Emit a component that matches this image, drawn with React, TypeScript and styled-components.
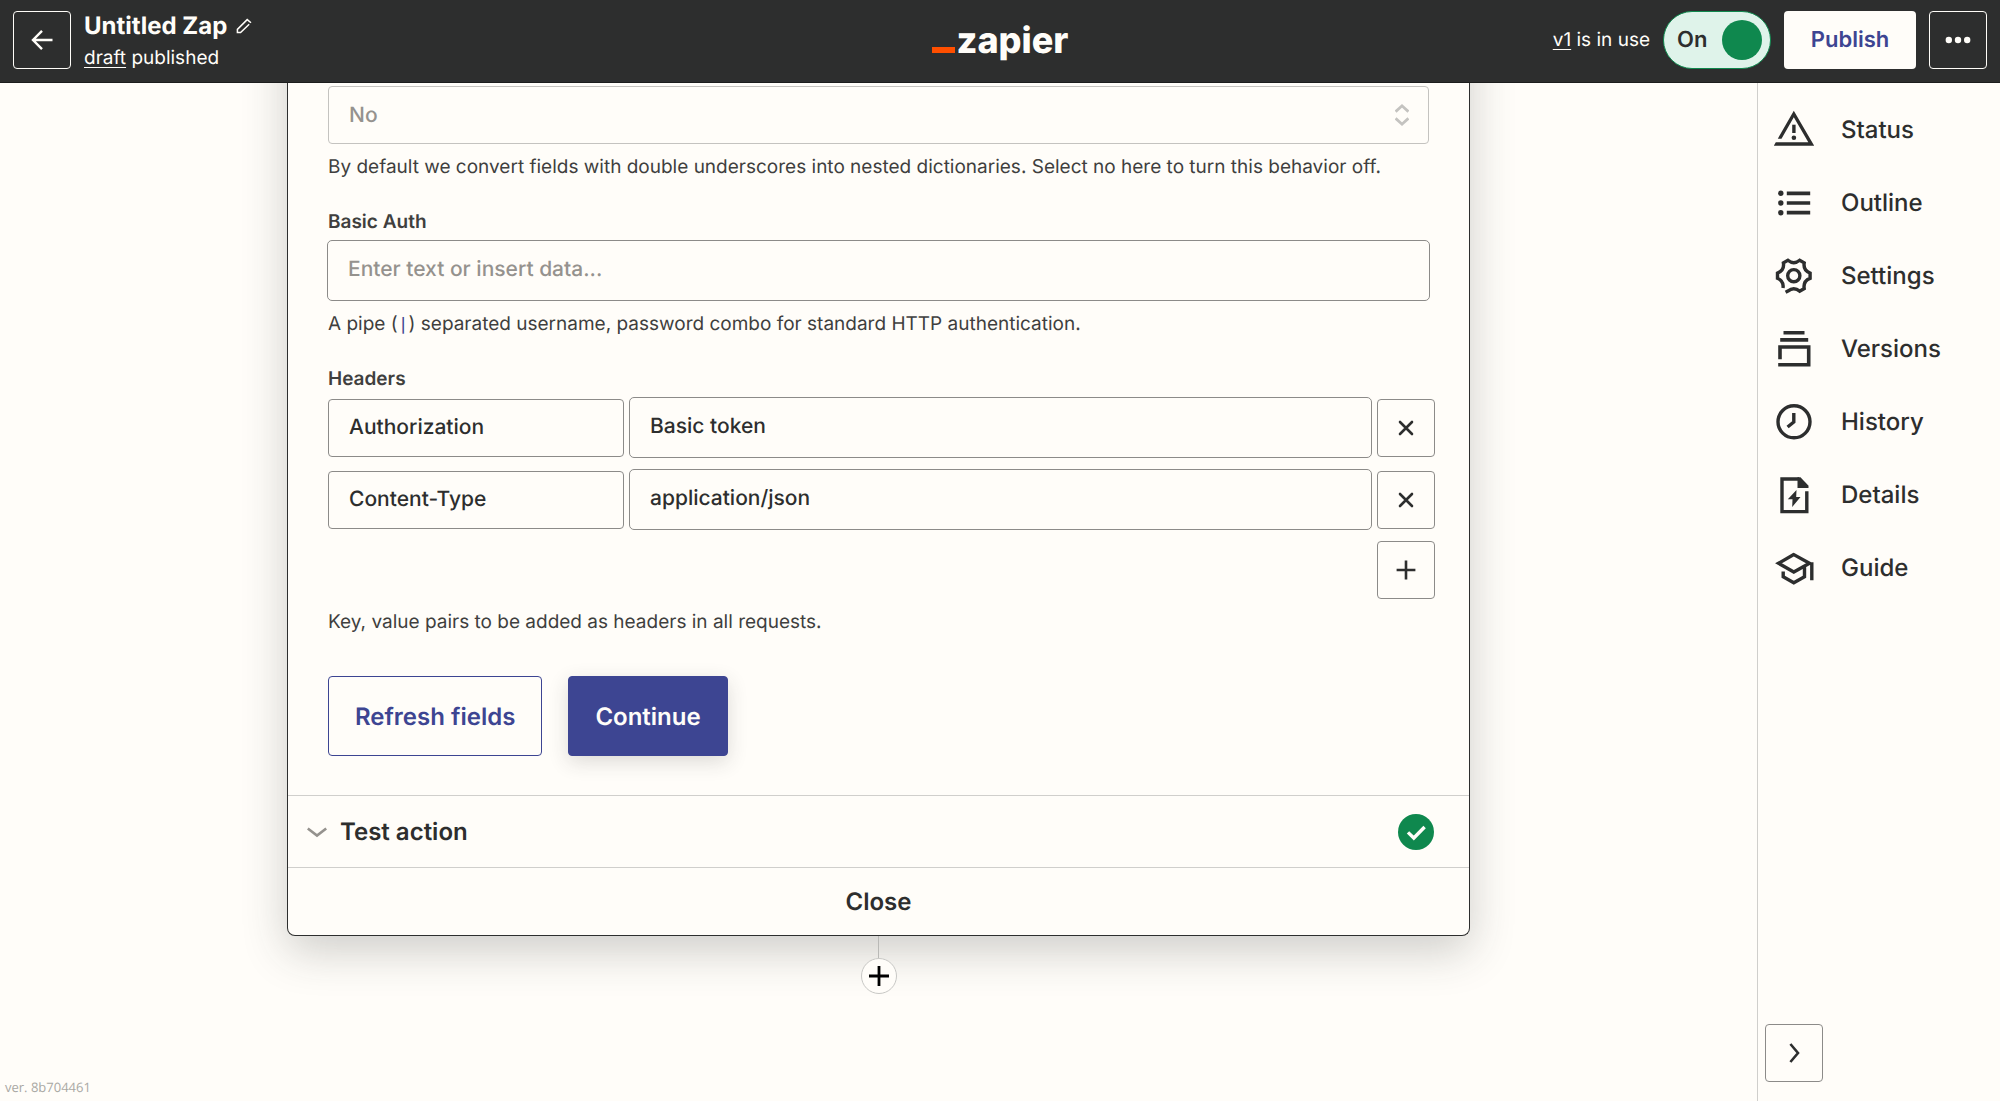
import React, { useState } from "react";
import styled, { createGlobalStyle } from "styled-components";

const color = {
  ink: "#2d2e2e",
  text: "#403f3e",
  paper: "#fffdf9",
  muted: "#95928e",
  line: "#d0cfcc",
  field: "#8c8b89",
  blue: "#3d4592",
  green: "#0f884e",
  mint: "#dff3ea",
  orange: "#ff4f00",
};

const GlobalStyle = createGlobalStyle`
  *, *::before, *::after { box-sizing: border-box; }
  body {
    margin: 0;
    background: ${color.paper};
    color: ${color.ink};
    font-family: Inter, "Liberation Sans", sans-serif;
    -webkit-font-smoothing: antialiased;
    text-rendering: geometricPrecision;
  }
  button, input, select { font: inherit; color: inherit; margin: 0; text-rendering: inherit; }
  button { cursor: pointer; padding: 0; }
  input { display: block; }
  svg { display: block; flex: none; }
`;

const Page = styled.div`
  display: grid;
  grid-template-rows: auto 1fr;
  height: 100vh;
`;

/* ---------- top bar ---------- */

const TopBar = styled.header`
  display: grid;
  grid-template-columns: 1fr auto 1fr;
  align-items: center;
  height: 83px;
  padding: 0 13px 2px;
  background: ${color.ink};
  border-bottom: 1px solid #1c1d1d;
  color: ${color.paper};
`;

const BarGroup = styled.div<{ $end?: boolean }>`
  display: flex;
  align-items: center;
  justify-content: ${(p) => (p.$end ? "flex-end" : "flex-start")};
  gap: 13px;
`;

const SquareButton = styled.button<{ $dark?: boolean }>`
  display: grid;
  place-items: center;
  width: 58px;
  height: 58px;
  border: 1px solid ${(p) => (p.$dark ? color.paper : color.field)};
  border-radius: 4px;
  background: transparent;
  color: ${(p) => (p.$dark ? color.paper : color.ink)};
`;

const Titles = styled.div`
  display: flex;
  flex-direction: column;
  gap: 3px;
  padding-top: 3px;
`;

const ZapName = styled.h1`
  display: flex;
  align-items: center;
  gap: 9px;
  margin: 0;
  font-size: 24px;
  line-height: 30px;
  font-weight: 700;
`;

const BareButton = styled.button`
  border: 0;
  background: none;
`;

const BarNote = styled.p`
  margin: 0;
  font-size: 19px;
  line-height: 28px;
  a { color: inherit; text-underline-offset: 3px; }
`;

const Logo = styled.a`
  display: flex;
  align-items: baseline;
  gap: 2px;
  color: ${color.paper};
  font-size: 36px;
  line-height: 46px;
  font-weight: 800;
  text-decoration: none;
  &::before {
    content: "";
    width: 23px;
    height: 6px;
    background: ${color.orange};
  }
`;

const Toggle = styled.label`
  display: flex;
  align-items: center;
  justify-content: space-between;
  width: 108px;
  height: 58px;
  padding: 0 8px 0 13px;
  border: 1px solid ${color.green};
  border-radius: 29px;
  background: ${color.mint};
  color: ${color.ink};
  font-size: 22px;
  font-weight: 600;
  cursor: pointer;
`;

const ToggleInput = styled.input`
  appearance: none;
  width: 40px;
  height: 40px;
  border-radius: 50%;
  background: ${color.green};
  cursor: pointer;
  &:not(:checked) { background: ${color.muted}; }
`;

const Publish = styled.button`
  width: 132px;
  height: 58px;
  border: 0;
  border-radius: 4px;
  background: ${color.paper};
  color: ${color.blue};
  font-size: 22px;
  font-weight: 600;
`;

/* ---------- body ---------- */

const Body = styled.div`
  display: grid;
  grid-template-columns: 1fr 243px;
  min-height: 0;
`;

const Canvas = styled.main`
  display: flex;
  flex-direction: column;
  align-items: center;
  overflow: auto;
`;

const Card = styled.section`
  flex: none;
  width: calc(100% - 40px);
  max-width: 1183px;
  margin-top: -120px;
  padding-top: 123px;
  border: 1px solid ${color.ink};
  border-top: 0;
  border-radius: 8px;
  background: ${color.paper};
  box-shadow: 0 15px 45px rgba(45, 46, 46, 0.23);
`;

const Form = styled.form`
  padding: 0 40px 39px;
`;

const Field = styled.div`
  margin-bottom: 28px;
`;

const FieldLabel = styled.label`
  display: block;
  margin-bottom: 4px;
  color: ${color.text};
  font-size: 19px;
  line-height: 28px;
  font-weight: 600;
`;

const Help = styled.p`
  margin: 9px 0 0;
  color: ${color.text};
  font-size: 19px;
  line-height: 27px;
  code {
    color: ${color.blue};
    font-family: "Liberation Mono", monospace;
    font-size: 18px;
    line-height: 1;
  }
`;

const SelectWrap = styled.div`
  display: grid;
  align-items: center;
  color: #c4c3c0;
  > * { grid-area: 1 / 1; }
  > svg { justify-self: end; margin-right: 20px; pointer-events: none; }
`;

const Select = styled.select`
  appearance: none;
  width: 100%;
  height: 58px;
  padding: 0 20px;
  border: 1px solid #c4c3c0;
  border-radius: 4px;
  background: transparent;
  color: ${color.muted};
  font-size: 21px;
  font-weight: 500;
  opacity: 1;
`;

const KeyInput = styled.input`
  width: 100%;
  height: 58px;
  padding: 0 20px;
  border: 1px solid ${color.field};
  border-radius: 4px;
  background: transparent;
  font-size: 21px;
  font-weight: 500;
  &::placeholder { color: ${color.muted}; opacity: 1; }
`;

const ValueInput = styled(KeyInput)`
  height: 61px;
  padding-bottom: 3px;
  border-radius: 5px;
`;

const WideField = styled.div`
  margin: 0 -1px;
`;

const HeaderRows = styled.div`
  display: grid;
  grid-template-columns: 296px 1fr 58px;
  align-items: center;
  gap: 11px 5px;
  margin-right: -6px;
`;

const AddButton = styled(SquareButton)`
  grid-column: 3;
`;

const Actions = styled.div`
  display: flex;
  gap: 26px;
  margin-top: 41px;
`;

const ActionButton = styled.button<{ $filled?: boolean }>`
  height: 80px;
  padding: 0 26px;
  border: 1px solid ${color.blue};
  border-radius: 4px;
  background: ${(p) => (p.$filled ? color.blue : "transparent")};
  color: ${(p) => (p.$filled ? color.paper : color.blue)};
  box-shadow: ${(p) => (p.$filled ? "0 6px 20px rgba(45, 46, 46, 0.16)" : "none")};
  font-size: 24px;
  font-weight: 600;
`;

const SectionRow = styled.button`
  display: flex;
  align-items: center;
  gap: 13px;
  width: 100%;
  height: 72px;
  padding: 0 35px 0 19px;
  border: 0;
  border-top: 1px solid ${color.line};
  background: none;
  font-size: 24px;
  font-weight: 600;
  > :first-child { color: ${color.muted}; }
  > :last-child { margin-left: auto; }
`;

const CloseButton = styled.button`
  width: 100%;
  height: 68px;
  border: 0;
  border-top: 1px solid ${color.line};
  background: none;
  font-size: 24px;
  font-weight: 600;
`;

const Connector = styled.div`
  width: 1px;
  height: 22px;
  flex: none;
  background: #b9b9b6;
  z-index: 1;
`;

const AddStep = styled.button`
  display: grid;
  place-items: center;
  flex: none;
  width: 36px;
  height: 36px;
  border: 1px solid #c8c8c5;
  border-radius: 50%;
  background: ${color.paper};
  color: #000;
  z-index: 1;
`;

const Version = styled.footer`
  align-self: flex-start;
  margin-top: auto;
  padding: 0 5px 4px;
  color: #a9a8a4;
  font-family: "Open Sans", "Noto Sans", sans-serif;
  font-size: 13px;
  line-height: 20px;
`;

/* ---------- side panel ---------- */

const Side = styled.aside`
  display: flex;
  flex-direction: column;
  justify-content: space-between;
  padding: 10px 6px 19px 7px;
  border-left: 1px solid ${color.line};
`;

const SideItem = styled.button`
  display: flex;
  align-items: center;
  gap: 27px;
  width: 100%;
  height: 73px;
  padding: 0 9px;
  border: 0;
  background: none;
  font-size: 24px;
  font-weight: 500;
`;

/* ---------- icons ---------- */

const SideIcon = ({ children }: { children: React.ReactNode }) => (
  <svg width="40" height="40" viewBox="0 0 40 40" fill="none" stroke="currentColor" strokeWidth="3.4" overflow="visible" aria-hidden="true">
    {children}
  </svg>
);

const sideItems: { name: string; icon: React.ReactNode }[] = [
  {
    name: "Status",
    icon: (
      <g fill="currentColor" stroke="none">
        <path d="M3.8 28.7 19.8.7 40.2 35.7H-.2L1.8 32.3H34.3L19.8 7.3 7.5 28.7Z" />
        <path d="M18.2 14.7h3.4V23h-3.4z" />
        <circle cx="19.9" cy="27.7" r="2.3" />
      </g>
    ),
  },
  {
    name: "Outline",
    icon: (
      <>
        <path d="M12.8 10.3H36.2M12.8 20H36.2M12.8 29.7H36.2" strokeWidth="3.7" />
        <g fill="currentColor" stroke="none">
          <circle cx="6.8" cy="10.3" r="2.7" />
          <circle cx="6.8" cy="20" r="2.7" />
          <circle cx="6.8" cy="29.7" r="2.7" />
        </g>
      </>
    ),
  },
  {
    name: "Settings",
    icon: (
      <>
        <path d="M11.6 36.3 13.9 35.1Q19.8 30.3 25.7 35.1L30.2 32.5Q29 25 36.1 22.3V17.1Q29 14.4 30.2 6.9L25.7 4.3Q19.8 9.1 13.9 4.3L9.4 6.9Q10.6 14.4 3.5 17.1V22.3Q10 25 9 32" />
        <circle cx="19.8" cy="19.7" r="6.1" />
      </>
    ),
  },
  {
    name: "Versions",
    icon: <path d="M9.5 3.7H30.5M6.2 10.9H34.2M6 30.3V18H34.7V35.8H4.2" strokeWidth="3.6" />,
  },
  {
    name: "History",
    icon: (
      <>
        <circle cx="20" cy="19.8" r="16" />
        <path d="M19.8 11V20L13.6 25" />
      </>
    ),
  },
  {
    name: "Details",
    icon: (
      <>
        <path d="M25 4H8V36.6H32.8V16.3" />
        <g fill="currentColor" stroke="none">
          <path d="M23.5 2.3h3l8 8.4V13h-11z" />
          <path d="M22.5 15 13.8 24.3h4.7L18.2 32 26.5 22h-4.3z" />
        </g>
      </>
    ),
  },
  {
    name: "Guide",
    icon: <path d="M19.8 6.6 4.5 15.3 19.8 24 35.5 15.3ZM37.8 14.2V32.3M9.2 23.5V28.8L19.8 34.7 30.5 28.8V17.5" />,
  },
];

const Stroke = ({ size, d, w, square }: { size: number; d: string; w: number; square?: boolean }) => (
  <svg
    width={size}
    height={size}
    viewBox={`0 0 ${size} ${size}`}
    fill="none"
    stroke="currentColor"
    strokeWidth={w}
    strokeLinecap={square ? "butt" : "round"}
    aria-hidden="true"
  >
    <path d={d} />
  </svg>
);

export default function App() {
  const [on, setOn] = useState(true);
  const [rows, setRows] = useState([
    { key: "Authorization", value: "Basic token" },
    { key: "Content-Type", value: "application/json" },
  ]);

  const edit = (index: number, part: "key" | "value", text: string) =>
    setRows(rows.map((row, i) => (i === index ? { ...row, [part]: text } : row)));

  return (
    <>
      <GlobalStyle />
      <Page>
        <TopBar>
          <BarGroup>
            <SquareButton $dark aria-label="Back">
              <Stroke size={24} d="M22.5 12H3M12 2.8 3 12 12 21.2" w={2.4} square />
            </SquareButton>
            <Titles>
              <ZapName>
                Untitled Zap
                <BareButton aria-label="Rename">
                  <Stroke size={16} d="M13.2 6.2 4.6 14.6H1.4V11.4L11.2 1.6 15 4.8" w={1.5} square />
                </BareButton>
              </ZapName>
              <BarNote>
                <a href="#draft">draft</a> published
              </BarNote>
            </Titles>
          </BarGroup>
          <Logo href="#home">zapier</Logo>
          <BarGroup $end>
            <BarNote>
              <a href="#v1">v1</a> is in use
            </BarNote>
            <Toggle>
              On
              <ToggleInput type="checkbox" role="switch" checked={on} onChange={(e) => setOn(e.target.checked)} />
            </Toggle>
            <Publish>Publish</Publish>
            <SquareButton $dark aria-label="More">
              <svg width="26" height="8" viewBox="0 0 26 8" fill="currentColor" aria-hidden="true">
                <circle cx="3.8" cy="4" r="3.2" />
                <circle cx="13" cy="4" r="3.2" />
                <circle cx="22.2" cy="4" r="3.2" />
              </svg>
            </SquareButton>
          </BarGroup>
        </TopBar>

        <Body>
          <Canvas>
            <Card>
              <Form onSubmit={(e) => e.preventDefault()}>
                <Field>
                  <SelectWrap>
                    <Select aria-label="Unflatten" disabled defaultValue="No">
                      <option>No</option>
                    </Select>
                    <svg width="14" height="24" viewBox="0 0 14 24" fill="none" stroke="currentColor" strokeWidth="2.8" aria-hidden="true">
                      <path d="M.6 8.6 7 2.8 13.4 8.6M.6 15.4 7 21.2 13.4 15.4" />
                    </svg>
                  </SelectWrap>
                  <Help>
                    By default we convert fields with double underscores into nested dictionaries. Select no here to turn
                    this behavior off.
                  </Help>
                </Field>

                <Field>
                  <FieldLabel htmlFor="basic-auth">Basic Auth</FieldLabel>
                  <WideField>
                    <ValueInput id="basic-auth" placeholder="Enter text or insert data..." />
                  </WideField>
                  <Help>
                    A pipe (<code>|</code>) separated username, password combo for standard HTTP authentication.
                  </Help>
                </Field>

                <FieldLabel htmlFor="header-0">Headers</FieldLabel>
                <HeaderRows>
                  {rows.map((row, i) => (
                    <React.Fragment key={i}>
                      <KeyInput
                        id={`header-${i}`}
                        aria-label="Header name"
                        value={row.key}
                        onChange={(e) => edit(i, "key", e.target.value)}
                      />
                      <ValueInput
                        aria-label="Header value"
                        value={row.value}
                        onChange={(e) => edit(i, "value", e.target.value)}
                      />
                      <SquareButton
                        type="button"
                        aria-label="Remove header"
                        onClick={() => setRows(rows.filter((_, n) => n !== i))}
                      >
                        <Stroke size={18} d="M3 3 15 15M15 3 3 15" w={2.6} />
                      </SquareButton>
                    </React.Fragment>
                  ))}
                  <AddButton
                    type="button"
                    aria-label="Add header"
                    onClick={() => setRows([...rows, { key: "", value: "" }])}
                  >
                    <Stroke size={20} d="M10 .6V19.4M.6 10H19.4" w={2.6} square />
                  </AddButton>
                </HeaderRows>
                <Help>Key, value pairs to be added as headers in all requests.</Help>

                <Actions>
                  <ActionButton type="button">Refresh fields</ActionButton>
                  <ActionButton $filled>Continue</ActionButton>
                </Actions>
              </Form>

              <SectionRow>
                <Stroke size={20} d="M.8 6.4 10 13.6 19.2 6.4" w={2.6} square />
                <span>Test action</span>
                <svg width="36" height="36" viewBox="0 0 36 36" aria-hidden="true">
                  <circle cx="18" cy="18" r="18" fill={color.green} />
                  <path d="M10 18.4 15.8 24 26.6 13" fill="none" stroke={color.paper} strokeWidth="3.4" />
                </svg>
              </SectionRow>
              <CloseButton>Close</CloseButton>
            </Card>
            <Connector />
            <AddStep aria-label="Add step">
              <Stroke size={20} d="M10 0V20M0 10H20" w={2.8} square />
            </AddStep>
            <Version>ver. 8b704461</Version>
          </Canvas>

          <Side>
            <nav>
              {sideItems.map((item) => (
                <SideItem key={item.name}>
                  <SideIcon>{item.icon}</SideIcon>
                  {item.name}
                </SideItem>
              ))}
            </nav>
            <SquareButton aria-label="Collapse panel">
              <Stroke size={20} d="M6.4 1 14 10 6.4 19" w={2.6} square />
            </SquareButton>
          </Side>
        </Body>
      </Page>
    </>
  );
}
